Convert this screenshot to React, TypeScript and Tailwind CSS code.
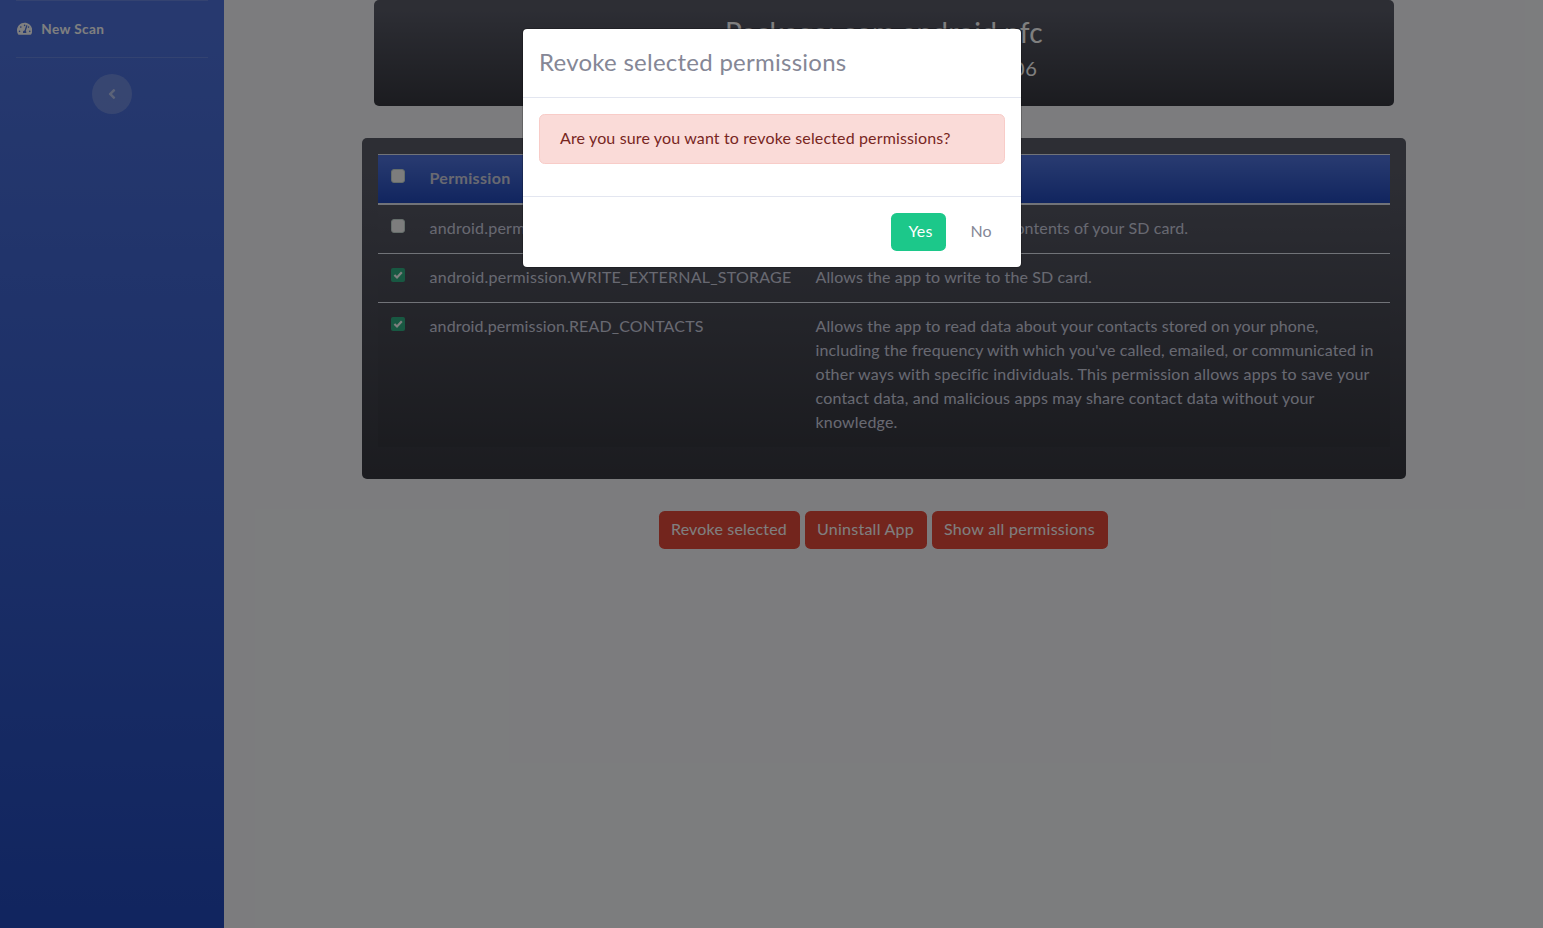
import type { ReactNode } from "react";
import { FaAngleLeft, FaTachometerAlt } from "react-icons/fa";

type Permission = {
  name: string;
  nameSpacing: string;
  checked: boolean;
  lines: { text: string; spacing: string }[];
};

const permissions: Permission[] = [
  {
    name: "android.permission.READ_EXTERNAL_STORAGE",
    nameSpacing: "tracking-[0.22px]",
    checked: false,
    lines: [{ text: "Allows the app to read the contents of your SD card.", spacing: "tracking-[0.12px]" }],
  },
  {
    name: "android.permission.WRITE_EXTERNAL_STORAGE",
    nameSpacing: "tracking-[0.249px]",
    checked: true,
    lines: [{ text: "Allows the app to write to the SD card.", spacing: "tracking-[0.118px]" }],
  },
  {
    name: "android.permission.READ_CONTACTS",
    nameSpacing: "tracking-[0.143px]",
    checked: true,
    lines: [
      { text: "Allows the app to read data about your contacts stored on your phone,", spacing: "tracking-[0.133px]" },
      { text: "including the frequency with which you've called, emailed, or communicated in", spacing: "tracking-[0.128px]" },
      { text: "other ways with specific individuals. This permission allows apps to save your", spacing: "tracking-[0.21px]" },
      { text: "contact data, and malicious apps may share contact data without your", spacing: "tracking-[0.181px]" },
      { text: "knowledge.", spacing: "tracking-[0.181px]" },
    ],
  },
];

function Checkbox({ checked = false }: { checked?: boolean }) {
  return (
    <span
      role="checkbox"
      aria-checked={checked}
      className={
        checked
          ? "flex size-3.5 items-center justify-center rounded-[2px] bg-[#31b184]"
          : "block size-3.5 rounded-[3px] border border-[#cbdcd6] bg-[#fbfbfb]"
      }
    >
      {checked && (
        <svg viewBox="0 0 14 14" className="size-3.5" fill="none" stroke="#fff" strokeWidth="2.2">
          <path d="M3.4 7 6 9.5 10.8 4.3" />
        </svg>
      )}
    </span>
  );
}

function DangerButton({ children, className }: { children: ReactNode; className: string }) {
  return (
    <button className={`h-[38px] whitespace-nowrap rounded-[5.6px] bg-[#e74a3b] pb-[3px] text-white ${className}`}>
      {children}
    </button>
  );
}

function Sidebar() {
  return (
    <aside className="flex h-full w-56 shrink-0 flex-col bg-linear-to-b from-[#4e73df] from-3% to-[#224abe] px-4">
      <hr className="border-white/15" />
      <a className="flex h-14 items-center gap-[9px] pt-px pl-px text-[13.6px] font-bold text-white">
        <FaTachometerAlt className="mb-px h-[13.6px] w-[15.3px]" />
        <span className="tracking-[0.385px]">New Scan</span>
      </a>
      <hr className="border-white/15" />
      <button className="mt-4 flex size-10 items-center justify-center self-center rounded-full bg-white/20 pr-px">
        <FaAngleLeft className="size-4 text-white/50" />
      </button>
    </aside>
  );
}

function PermissionTable() {
  return (
    <div className="w-full bg-linear-to-b from-[#5a5c69] from-10% to-[#373840] text-[#d1d3e2]">
      <div className="grid h-[51px] grid-cols-[40px_386px_1fr] border-t border-b-2 border-[#e3e6f0] bg-linear-to-b from-[#4e73df] from-10% to-[#224abe] font-bold leading-6">
        <div className="pt-[14px] pl-[13px]"><Checkbox /></div>
        <div className="pt-[11px] pl-[11.5px] tracking-[0.314px]">Permission</div>
        <div className="pt-[11px] pl-[11.5px] tracking-[0.314px]">Description</div>
      </div>
      {permissions.map((p, i) => (
        <div
          key={p.name}
          className={`grid grid-cols-[40px_386px_1fr] pb-[13px] leading-6 ${i > 0 ? "border-t border-[#e3e6f0]" : ""}`}
        >
          <div className="pt-[14px] pl-[13px]"><Checkbox checked={p.checked} /></div>
          <div className={`pt-[11px] pl-[11.5px] ${p.nameSpacing}`}>{p.name}</div>
          <div className="whitespace-nowrap pt-[11px] pl-[11.5px]">
            {p.lines.map((l) => (
              <div key={l.text} className={l.spacing}>{l.text}</div>
            ))}
          </div>
        </div>
      ))}
    </div>
  );
}

function RevokeModal() {
  return (
    <div
      role="dialog"
      className="absolute top-7 left-[522px] w-[500px] rounded-[5px] border border-black/20 bg-white bg-clip-padding text-[#858796]"
    >
      <div className="flex h-[69px] items-center border-b border-[#e3e6f0] px-4 pb-0.5 text-2xl tracking-[0.255px]">
        Revoke selected permissions
      </div>
      <div className="h-[98px] p-4">
        <div className="flex h-[50px] items-center rounded-[5.6px] border border-[#f8ccc8] bg-[#fadbd8] px-5 pb-0.5 tracking-[0.139px] text-[#78261f]">
          Are you sure you want to revoke selected permissions?
        </div>
      </div>
      <div className="flex h-[71px] items-center justify-end gap-2 border-t border-[#e3e6f0] px-4">
        <button className="h-[38px] w-[55px] rounded-[5.6px] bg-[#1cc88a] pb-0.5 pl-1 tracking-[0.2px] text-white">Yes</button>
        <button className="h-[38px] w-[51px] rounded-[5.6px] pb-0.5 pl-[3px]">No</button>
      </div>
    </div>
  );
}

export default function App() {
  return (
    <div className="relative flex h-[928px] w-[1543px] overflow-hidden bg-[#f8f9fc] font-['Lato',sans-serif] text-base">
      <Sidebar />
      <main className="flex flex-1 flex-col items-center pl-px">
        <header className="flex h-[106px] w-[1020px] flex-col items-center rounded-[5px] bg-linear-to-b from-[#5a5c69] from-10% to-[#373840] pt-[15px] text-white">
          <h2 className="text-[28px] leading-[34px] tracking-[0.268px]">Package: com.android.nfc</h2>
          <h5 className="mt-[7px] pl-px text-xl leading-6 tracking-[0.608px]">Scan date: 2020-05-12 14:22:06</h5>
        </header>
        <section className="mt-8 h-[341px] w-[1044px] rounded-[5px] bg-linear-to-b from-[#5a5c69] from-10% to-[#373840] p-4">
          <PermissionTable />
        </section>
        <div className="mt-8 flex gap-[5px] pr-0.5">
          <DangerButton className="w-[141px] tracking-[0.17px]">Revoke selected</DangerButton>
          <DangerButton className="w-[122px] tracking-[0.255px]">Uninstall App</DangerButton>
          <DangerButton className="w-[176px] tracking-[0.288px]">Show all permissions</DangerButton>
        </div>
      </main>
      <div className="absolute inset-0 bg-black/50" />
      <RevokeModal />
    </div>
  );
}
